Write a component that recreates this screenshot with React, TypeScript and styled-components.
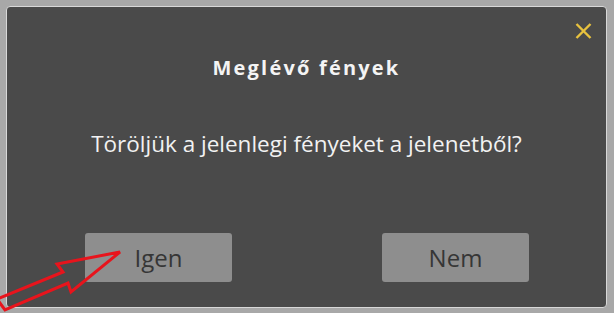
import React from "react";
import styled, { createGlobalStyle } from "styled-components";

const GlobalStyle = createGlobalStyle`
  html, body {
    margin: 0;
    padding: 0;
    background: #a8a8a8;
    width: 614px;
    height: 313px;
    overflow: hidden;
  }
  * { box-sizing: border-box; }
`;

const Screen = styled.div`
  position: relative;
  width: 614px;
  height: 313px;
  padding: 6px 0 0 6px;
  font-family: "Open Sans", "Noto Sans", sans-serif;
`;

const Dialog = styled.div`
  position: relative;
  width: 601px;
  height: 302px;
  border: 1px solid #d8d8d8;
  border-radius: 4px;
  background: #4a4a4a;
  display: flex;
  flex-direction: column;
  align-items: center;
`;

const Title = styled.h2`
  margin: 48px 0 0;
  font-size: 20px;
  line-height: 26px;
  font-weight: 700;
  letter-spacing: 2.2px;
  color: #f4f4f4;
`;

const Message = styled.p`
  margin: 48px 0 0;
  font-size: 22.5px;
  line-height: 30px;
  font-weight: 400;
  color: #f2f2f2;
`;

const ButtonRow = styled.div`
  margin-top: 74px;
  width: 100%;
  padding: 0 77px 0 78px;
  display: flex;
  justify-content: space-between;
`;

const Button = styled.button`
  width: 147px;
  height: 49px;
  border: none;
  border-radius: 3px;
  background: #8e8e8e;
  color: #363636;
  font-family: inherit;
  font-size: 24px;
  font-weight: 400;
  padding: 0;
  display: flex;
  align-items: center;
  justify-content: center;
`;

const Close = styled.button`
  position: absolute;
  top: 16px;
  right: 14px;
  width: 17px;
  height: 16px;
  padding: 0;
  border: none;
  background: transparent;
  display: block;
`;

const Overlay = styled.svg`
  position: absolute;
  left: 0;
  top: 0;
  pointer-events: none;
`;

export default function App() {
  return (
    <>
      <GlobalStyle />
      <Screen>
        <Dialog>
          <Close aria-label="Bezárás">
            <svg width="17" height="16" viewBox="0 0 17 16">
              <path
                d="M1.5 1 L15.5 15 M15.5 1 L1.5 15"
                stroke="#e8c23e"
                strokeWidth="2.4"
                strokeLinecap="butt"
              />
            </svg>
          </Close>
          <Title>Meglévő fények</Title>
          <Message>Töröljük a jelenlegi fényeket a jelenetből?</Message>
          <ButtonRow>
            <Button>Igen</Button>
            <Button>Nem</Button>
          </ButtonRow>
        </Dialog>
        <Overlay width="614" height="313" viewBox="0 0 614 313">
          <polygon
            points="120,252 57,264 63,272 -3,299 5,310 68,283 71,292"
            fill="none"
            stroke="#e8141c"
            strokeWidth="3"
            strokeLinejoin="miter"
          />
        </Overlay>
      </Screen>
    </>
  );
}
